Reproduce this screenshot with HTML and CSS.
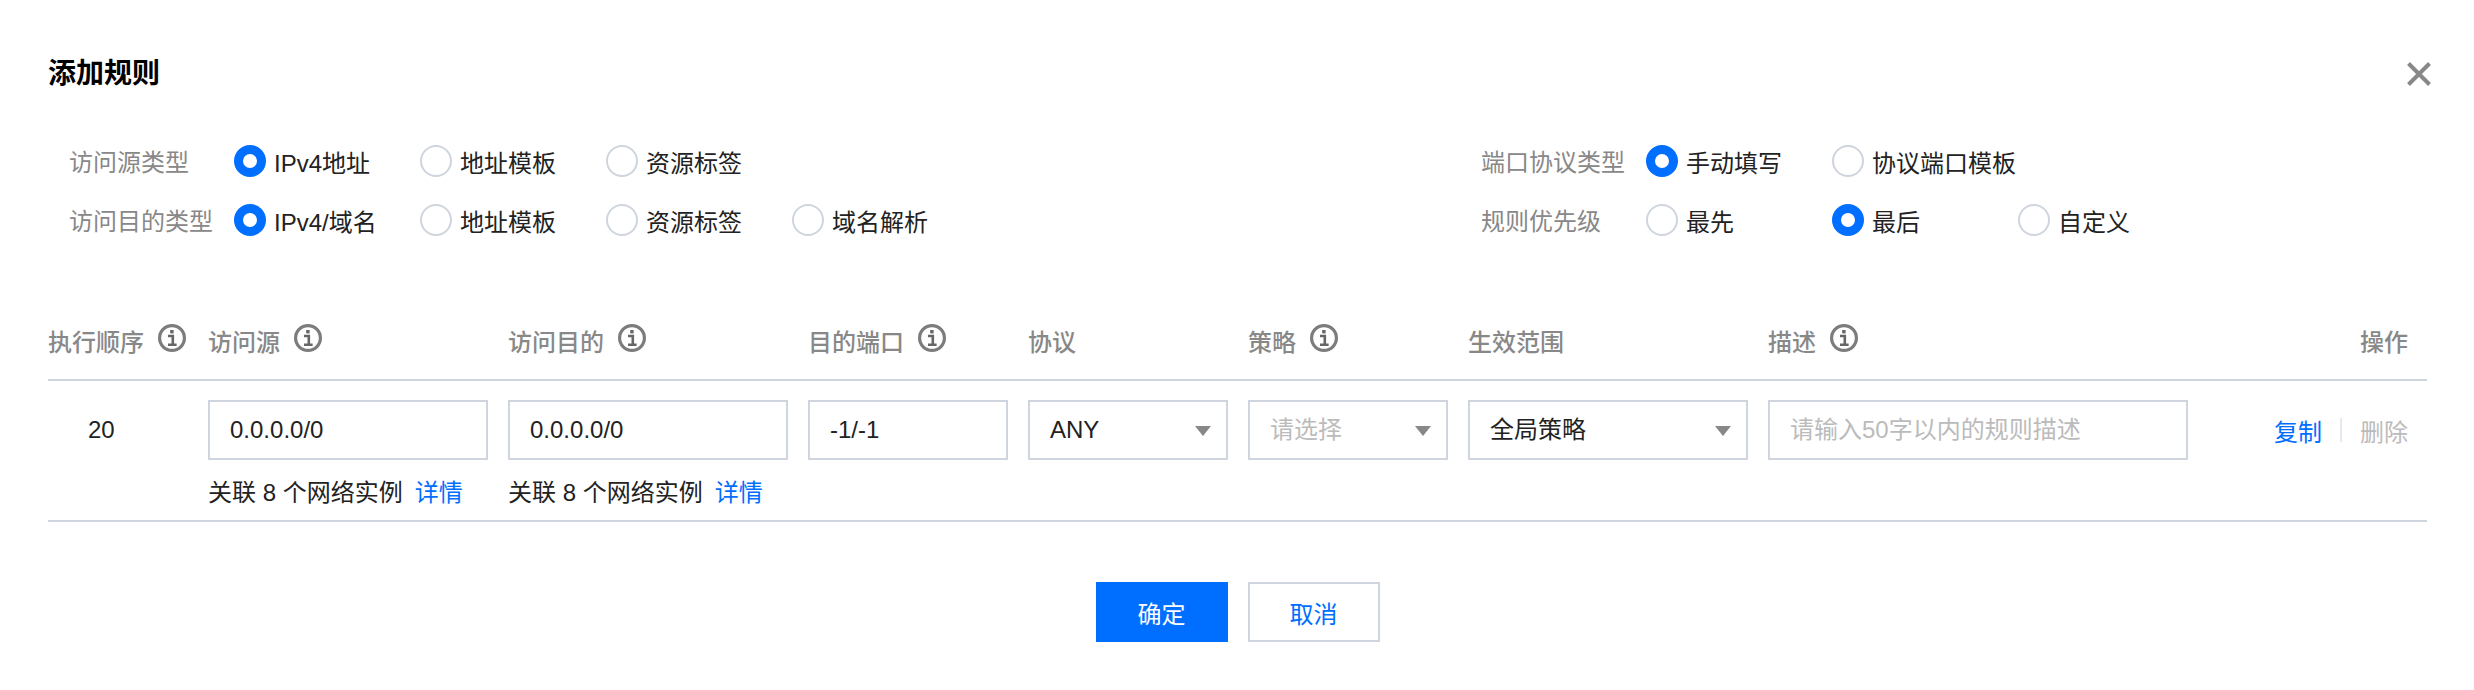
FILE: index.html
```html
<!DOCTYPE html>
<html lang="zh-CN">
<head>
    <meta charset="UTF-8">
    <meta name="viewport" content="width=device-width, initial-scale=1.0">
    <title>添加规则</title>
    <link rel="stylesheet" href="styles.css">
</head>
<body>
    <svg class="sprite" width="0" height="0">
        <symbol id="icon-info" viewBox="0 0 28 28">
            <circle cx="14" cy="14" r="12.4" fill="none" stroke="#7c7c7c" stroke-width="3.2"/>
            <rect x="12.2" y="6" width="3.4" height="3.4" fill="#666"/>
            <path d="M10 12h4.8v9M10 20.8h8.6" fill="none" stroke="#666" stroke-width="2.6"/>
        </symbol>
    </svg>

    <div class="dialog">
        <div class="dialog-head">
            <h3 class="dialog-title">添加规则</h3>
            <svg class="dialog-close" width="24" height="24" viewBox="0 0 24 24">
                <path d="M1.5 1.5l21 21M22.5 1.5l-21 21" fill="none" stroke="#888" stroke-width="4"/>
            </svg>
        </div>

        <div class="options">
            <div class="option-row">
                <span class="option-label">访问源类型</span>
                <label class="radio checked"><i></i>IPv4地址</label>
                <label class="radio"><i></i>地址模板</label>
                <label class="radio"><i></i>资源标签</label>
            </div>
            <div class="option-row">
                <span class="option-label">端口协议类型</span>
                <label class="radio checked"><i></i>手动填写</label>
                <label class="radio"><i></i>协议端口模板</label>
            </div>
            <div class="option-row">
                <span class="option-label">访问目的类型</span>
                <label class="radio checked"><i></i>IPv4/域名</label>
                <label class="radio"><i></i>地址模板</label>
                <label class="radio"><i></i>资源标签</label>
                <label class="radio"><i></i>域名解析</label>
            </div>
            <div class="option-row">
                <span class="option-label">规则优先级</span>
                <label class="radio"><i></i>最先</label>
                <label class="radio checked"><i></i>最后</label>
                <label class="radio"><i></i>自定义</label>
            </div>
        </div>

        <div class="rule-grid rule-head">
            <div class="head-cell">执行顺序<svg class="info"><use href="#icon-info"/></svg></div>
            <div class="head-cell">访问源<svg class="info"><use href="#icon-info"/></svg></div>
            <div class="head-cell">访问目的<svg class="info"><use href="#icon-info"/></svg></div>
            <div class="head-cell">目的端口<svg class="info"><use href="#icon-info"/></svg></div>
            <div class="head-cell">协议</div>
            <div class="head-cell">策略<svg class="info"><use href="#icon-info"/></svg></div>
            <div class="head-cell">生效范围</div>
            <div class="head-cell">描述<svg class="info"><use href="#icon-info"/></svg></div>
            <div class="head-cell right">操作</div>
        </div>

        <div class="rule-grid rule-row">
            <div class="cell order">20</div>
            <div class="cell">
                <input class="field" type="text" value="0.0.0.0/0">
                <p class="note">关联 8 个网络实例<a class="link">详情</a></p>
            </div>
            <div class="cell">
                <input class="field" type="text" value="0.0.0.0/0">
                <p class="note">关联 8 个网络实例<a class="link">详情</a></p>
            </div>
            <div class="cell"><input class="field" type="text" value="-1/-1"></div>
            <div class="cell"><div class="field select">ANY<span class="arrow"></span></div></div>
            <div class="cell"><div class="field select empty">请选择<span class="arrow"></span></div></div>
            <div class="cell"><div class="field select">全局策略<span class="arrow"></span></div></div>
            <div class="cell"><input class="field" type="text" placeholder="请输入50字以内的规则描述"></div>
            <div class="cell actions">
                <a class="link">复制</a>
                <span class="divider"></span>
                <a class="disabled">删除</a>
            </div>
        </div>

        <div class="dialog-foot">
            <button class="btn primary">确定</button>
            <button class="btn">取消</button>
        </div>
    </div>
</body>
</html>
```

FILE: styles.css
```css
*, *::before, *::after {
    box-sizing: border-box;
}
body {
    margin: 0;
    background: #fff;
    color: #000;
    font-family: "Liberation Sans", "Noto Sans CJK SC", sans-serif;
    font-size: 24px;
}
.sprite {
    display: block;
    position: absolute;
}
.dialog {
    height: 690px;
    padding: 52px 47px 0 48px;
}
.dialog-head {
    display: flex;
    align-items: center;
    justify-content: space-between;
    height: 40px;
}
.dialog-title {
    margin: 4px 0 0;
    font-size: 28px;
    font-weight: 700;
    line-height: 40px;
}
.dialog-close {
    margin: 3px -4px 0 0;
}

/*--------- options -------------*/
.options {
    display: grid;
    grid-template-columns: 1412px 1fr;
    grid-auto-rows: 32px;
    row-gap: 27px;
    margin-top: 53px;
    padding-left: 21px;
}
.option-row {
    display: flex;
    align-items: center;
}
.option-label {
    width: 165px;
    color: #888;
    margin-top: -2px;
}
.radio {
    display: flex;
    align-items: center;
    gap: 8px;
    width: 186px;
    color: #222;
}
.radio i {
    width: 32px;
    height: 32px;
    border: 2px solid #cfd5de;
    border-radius: 50%;
    flex: none;
}
.radio.checked i {
    border: 9px solid #006eff;
}

/*--------- rule table -------------*/
.rule-grid {
    display: grid;
    grid-template-columns: 160px 300px 300px 220px 220px 220px 300px 440px 1fr;
}
.rule-head {
    height: 61px;
    margin-top: 84px;
    padding-bottom: 19px;
    border-bottom: 2px solid #cfd5de;
}
.head-cell {
    display: flex;
    align-items: center;
    gap: 14px;
    color: #888;
    font-weight: 500;
}
.head-cell.right {
    justify-content: flex-end;
    padding-right: 19px;
}
.info {
    width: 28px;
    height: 28px;
    margin-top: -4px;
}
.rule-row {
    padding: 19px 0 10px;
    border-bottom: 2px solid #cfd5de;
}
.cell {
    padding-right: 20px;
}
.order {
    padding-left: 40px;
    line-height: 60px;
    color: #222;
}
.field {
    display: block;
    width: 100%;
    height: 60px;
    padding: 0 20px;
    border: 2px solid #cfd5de;
    border-radius: 0;
    outline: none;
    background: #fff;
    color: #222;
    font: inherit;
    line-height: 56px;
}
.field::placeholder {
    color: #bbb;
    opacity: 1;
}
.select {
    position: relative;
}
.select.empty {
    color: #bbb;
}
.arrow {
    position: absolute;
    right: 15px;
    top: 24px;
    border-top: 10px solid #888;
    border-left: 8px solid transparent;
    border-right: 8px solid transparent;
}
.note {
    margin: 16px 0 0;
    line-height: 34px;
    color: #222;
}
.link {
    color: #006eff;
}
.note .link {
    margin-left: 12px;
}
.actions {
    display: flex;
    align-items: center;
    justify-content: flex-end;
    gap: 18px;
    height: 60px;
    padding-right: 19px;
}
.divider {
    width: 2px;
    height: 24px;
    background: #e5e8ee;
}
.disabled {
    color: #bbb;
}

/*--------- footer -------------*/
.dialog-foot {
    display: flex;
    justify-content: center;
    gap: 20px;
    margin-top: 60px;
}
.btn {
    width: 132px;
    height: 60px;
    padding: 0;
    border: 2px solid #cfd5de;
    border-radius: 0;
    background: #fff;
    color: #006eff;
    font: inherit;
}
.btn.primary {
    border-color: #006eff;
    background: #006eff;
    color: #fff;
}
```
